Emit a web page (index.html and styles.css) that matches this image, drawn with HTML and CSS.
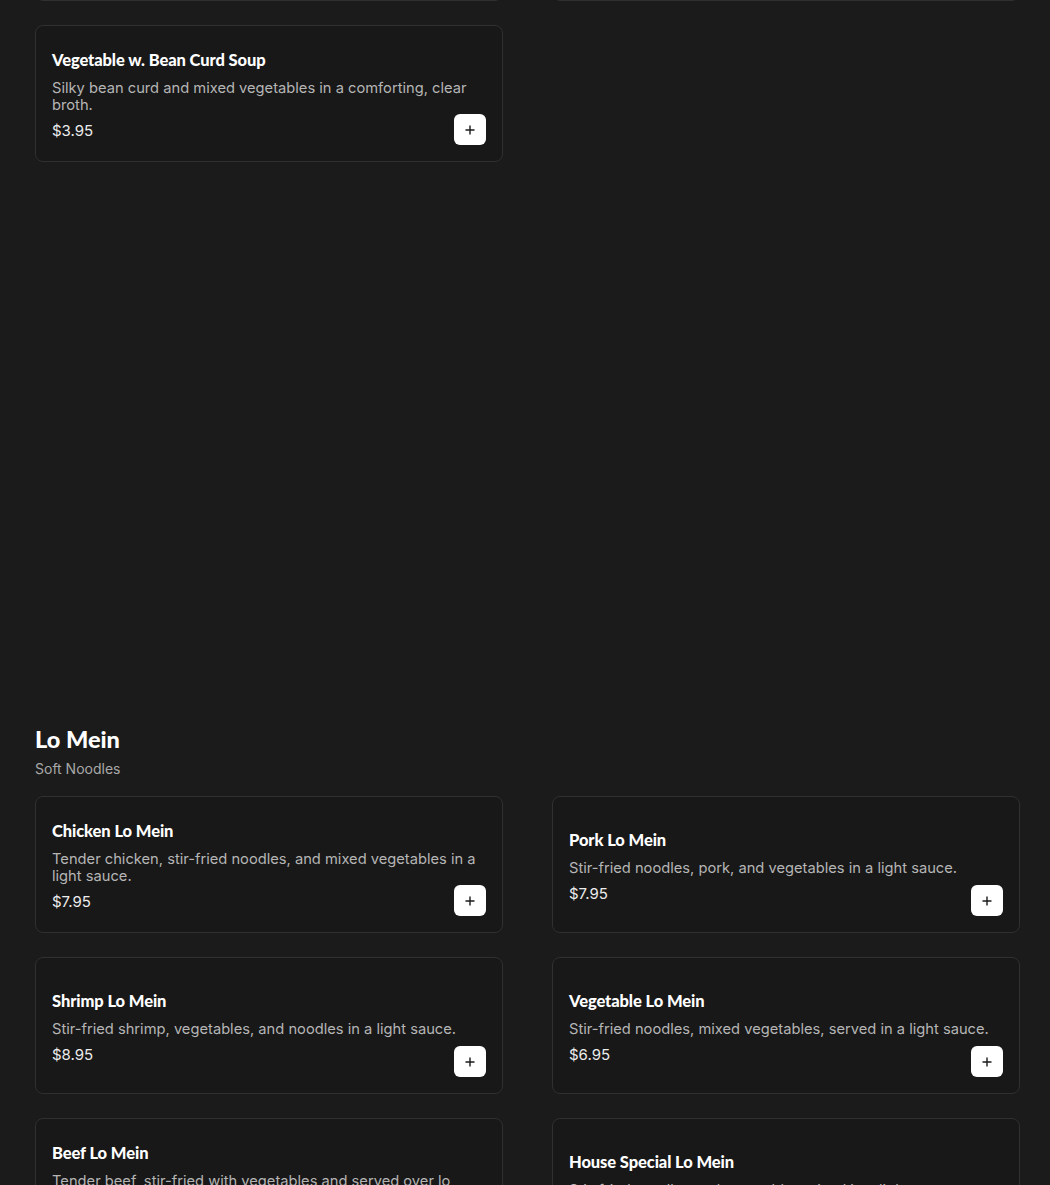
FILE: index.html
```html
<!DOCTYPE html>
<html lang="en">
<head>
<meta charset="utf-8">
<title>Menu</title>
<link rel="stylesheet" href="styles.css">
</head>
<body>
<main class="page">
  <section class="section section-soup">
    <div class="grid">
      <article class="card">
        <div class="card-body">
          <h3 class="item-name">Egg Drop Soup</h3>
          <p class="item-desc">Silky ribbons of egg in a light, savory chicken broth.</p>
          <p class="item-price">$2.95</p>
        </div>
        <button class="add-btn" aria-label="Add"><svg viewBox="0 0 12 12" width="12" height="12"><path d="M6 1.5v9M1.5 6h9" stroke="#1b1b1b" stroke-width="1.4"/></svg></button>
      </article>
      <article class="card">
        <div class="card-body">
          <h3 class="item-name">Hot &amp; Sour Soup</h3>
          <p class="item-desc">A spicy and tangy broth with tofu, bamboo shoots and egg.</p>
          <p class="item-price">$3.95</p>
        </div>
        <button class="add-btn" aria-label="Add"><svg viewBox="0 0 12 12" width="12" height="12"><path d="M6 1.5v9M1.5 6h9" stroke="#1b1b1b" stroke-width="1.4"/></svg></button>
      </article>
      <article class="card">
        <div class="card-body">
          <h3 class="item-name">Vegetable w. Bean Curd Soup</h3>
          <p class="item-desc">Silky bean curd and mixed vegetables in a comforting, clear broth.</p>
          <p class="item-price">$3.95</p>
        </div>
        <button class="add-btn" aria-label="Add"><svg viewBox="0 0 12 12" width="12" height="12"><path d="M6 1.5v9M1.5 6h9" stroke="#1b1b1b" stroke-width="1.4"/></svg></button>
      </article>
    </div>
  </section>

  <section class="section">
    <header class="section-head">
      <h2 class="section-title">Lo Mein</h2>
      <p class="section-sub">Soft Noodles</p>
    </header>
    <div class="grid">
      <article class="card">
        <div class="card-body">
          <h3 class="item-name">Chicken Lo Mein</h3>
          <p class="item-desc">Tender chicken, stir-fried noodles, and mixed vegetables in a light sauce.</p>
          <p class="item-price">$7.95</p>
        </div>
        <button class="add-btn" aria-label="Add"><svg viewBox="0 0 12 12" width="12" height="12"><path d="M6 1.5v9M1.5 6h9" stroke="#1b1b1b" stroke-width="1.4"/></svg></button>
      </article>
      <article class="card">
        <div class="card-body">
          <h3 class="item-name">Pork Lo Mein</h3>
          <p class="item-desc">Stir-fried noodles, pork, and vegetables in a light sauce.</p>
          <p class="item-price">$7.95</p>
        </div>
        <button class="add-btn" aria-label="Add"><svg viewBox="0 0 12 12" width="12" height="12"><path d="M6 1.5v9M1.5 6h9" stroke="#1b1b1b" stroke-width="1.4"/></svg></button>
      </article>
      <article class="card">
        <div class="card-body">
          <h3 class="item-name">Shrimp Lo Mein</h3>
          <p class="item-desc">Stir-fried shrimp, vegetables, and noodles in a light sauce.</p>
          <p class="item-price">$8.95</p>
        </div>
        <button class="add-btn" aria-label="Add"><svg viewBox="0 0 12 12" width="12" height="12"><path d="M6 1.5v9M1.5 6h9" stroke="#1b1b1b" stroke-width="1.4"/></svg></button>
      </article>
      <article class="card">
        <div class="card-body">
          <h3 class="item-name">Vegetable Lo Mein</h3>
          <p class="item-desc">Stir-fried noodles, mixed vegetables, served in a light sauce.</p>
          <p class="item-price">$6.95</p>
        </div>
        <button class="add-btn" aria-label="Add"><svg viewBox="0 0 12 12" width="12" height="12"><path d="M6 1.5v9M1.5 6h9" stroke="#1b1b1b" stroke-width="1.4"/></svg></button>
      </article>
      <article class="card">
        <div class="card-body">
          <h3 class="item-name">Beef Lo Mein</h3>
          <p class="item-desc">Tender beef, stir-fried with vegetables and served over lo mein noodles.</p>
          <p class="item-price">$8.95</p>
        </div>
        <button class="add-btn" aria-label="Add"><svg viewBox="0 0 12 12" width="12" height="12"><path d="M6 1.5v9M1.5 6h9" stroke="#1b1b1b" stroke-width="1.4"/></svg></button>
      </article>
      <article class="card">
        <div class="card-body">
          <h3 class="item-name">House Special Lo Mein</h3>
          <p class="item-desc">Stir-fried noodles and vegetables mixed in a light sauce.</p>
          <p class="item-price">$8.95</p>
        </div>
        <button class="add-btn" aria-label="Add"><svg viewBox="0 0 12 12" width="12" height="12"><path d="M6 1.5v9M1.5 6h9" stroke="#1b1b1b" stroke-width="1.4"/></svg></button>
      </article>
    </div>
  </section>
</main>
</body>
</html>
```

FILE: styles.css
```css
* { box-sizing: border-box; }

html, body {
  margin: 0;
  padding: 0;
  background: #1b1b1b;
}

body {
  font-family: "Inter", "Liberation Sans", sans-serif;
  color: #f2f2f2;
  overflow: hidden;
}

.page {
  padding: 0 30px 0 35px;
  margin-top: -136px;
}

.section-soup {
  margin-bottom: 565px;
}

.grid {
  display: grid;
  grid-template-columns: 1fr 1fr;
  column-gap: 49px;
  row-gap: 24px;
}

.card {
  display: grid;
  grid-template-columns: 1fr;
  grid-template-rows: 1fr;
  min-height: 137px;
  padding: 16px;
  background: #181818;
  border: 1px solid #303030;
  border-radius: 8px;
}

.card-body {
  grid-area: 1 / 1;
  display: flex;
  flex-direction: column;
  justify-content: center;
  padding-top: 4px;
}

.item-name {
  margin: 0;
  font-family: "Lato", "Liberation Sans", sans-serif;
  font-weight: 900;
  font-size: 16.5px;
  line-height: 20px;
  color: #ffffff;
  letter-spacing: -0.1px;
}

.item-desc {
  margin: 10px 0 0;
  font-size: 14.7px;
  line-height: 17px;
  color: #b5b5b5;
  font-weight: 400;
}

.item-price {
  margin: 7px 0 0;
  font-size: 15px;
  line-height: 20px;
  color: #ececec;
}

.add-btn {
  grid-area: 1 / 1;
  justify-self: end;
  align-self: end;
  width: 32px;
  height: 31px;
  margin-bottom: 0;
  padding: 0;
  border: none;
  border-radius: 6px;
  background: #ffffff;
  display: flex;
  align-items: center;
  justify-content: center;
  cursor: pointer;
}

.section-head {
  margin-bottom: 18px;
}

.section-title {
  margin: -2px 0 0;
  font-family: "Lato", "Liberation Sans", sans-serif;
  font-weight: 900;
  font-size: 23.5px;
  line-height: 28px;
  color: #ffffff;
}

.section-sub {
  margin: 7px 0 0;
  font-size: 14px;
  line-height: 18px;
  color: #a8a8a8;
}
```
